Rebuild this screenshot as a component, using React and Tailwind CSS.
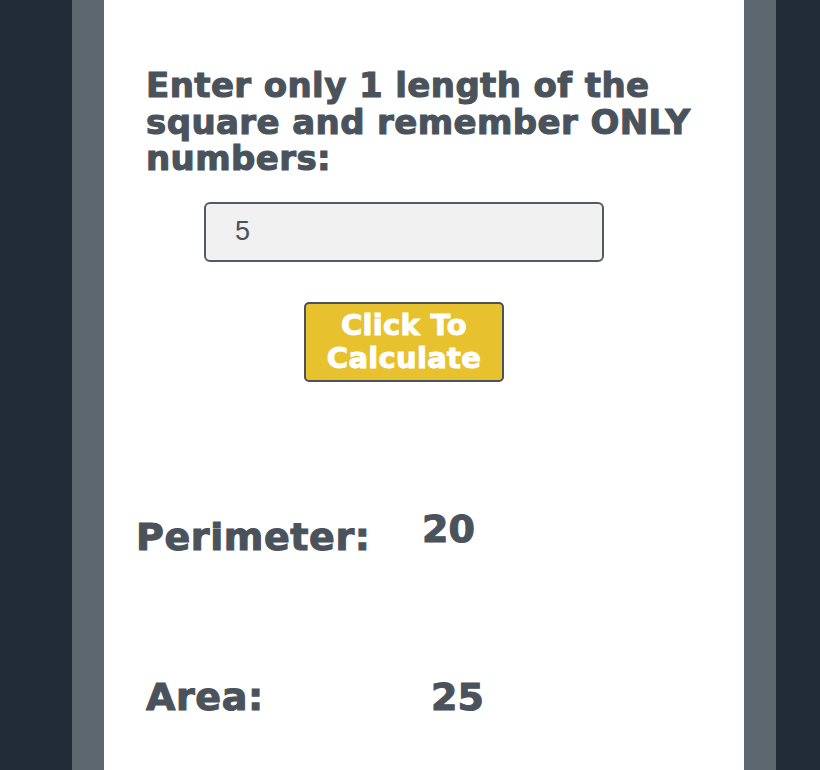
export default function App() {
  return (
    <div className="min-h-[770px] w-full bg-[#222c36] flex font-['DejaVu_Sans','Liberation_Sans',sans-serif]">
      <div className="ml-[72px] w-[704px] bg-[#5c6770] px-8 flex">
        <main className="w-[640px] bg-white flex flex-col">
          <h1 className="mt-[67px] ml-[42px] w-[590px] text-[34px] leading-[36.5px] font-bold tracking-[0.4px] text-[#4a525b] [-webkit-text-stroke:1.1px_#4a525b]">
            Enter only 1 length of the square and remember ONLY numbers:
          </h1>
          <div className="mt-[25px] ml-[100px] w-[400px] h-[60px] rounded-md border-2 border-[#555a60] bg-[#f1f1f1] flex items-center pl-[29px] text-[27px] text-[#4a525b] font-['Liberation_Sans',Arial,sans-serif]">
            5
          </div>
          <div className="mt-10 ml-[200px]">
            <button className="w-[200px] h-20 rounded-[5px] border-2 border-[#4a525b] bg-[#e8c12f] text-white text-[29px] leading-[33px] font-bold tracking-[0.3px] [-webkit-text-stroke:1px_white]">
              Click To<br />Calculate
            </button>
          </div>
          <div className="mt-[125px] flex items-start text-[#4a525b] font-bold text-[38px] leading-[44px] [-webkit-text-stroke:1.1px_#4a525b]">
            <div className="w-[318px] pl-8 mt-2 tracking-[0.6px]">Perimeter:</div>
            <div>20</div>
          </div>
          <div className="mt-[116px] flex items-start text-[#4a525b] font-bold text-[38px] leading-[44px] [-webkit-text-stroke:1.1px_#4a525b]">
            <div className="w-[327px] pl-[42px] tracking-[0.6px]">Area:</div>
            <div>25</div>
          </div>
        </main>
      </div>
    </div>
  );
}
